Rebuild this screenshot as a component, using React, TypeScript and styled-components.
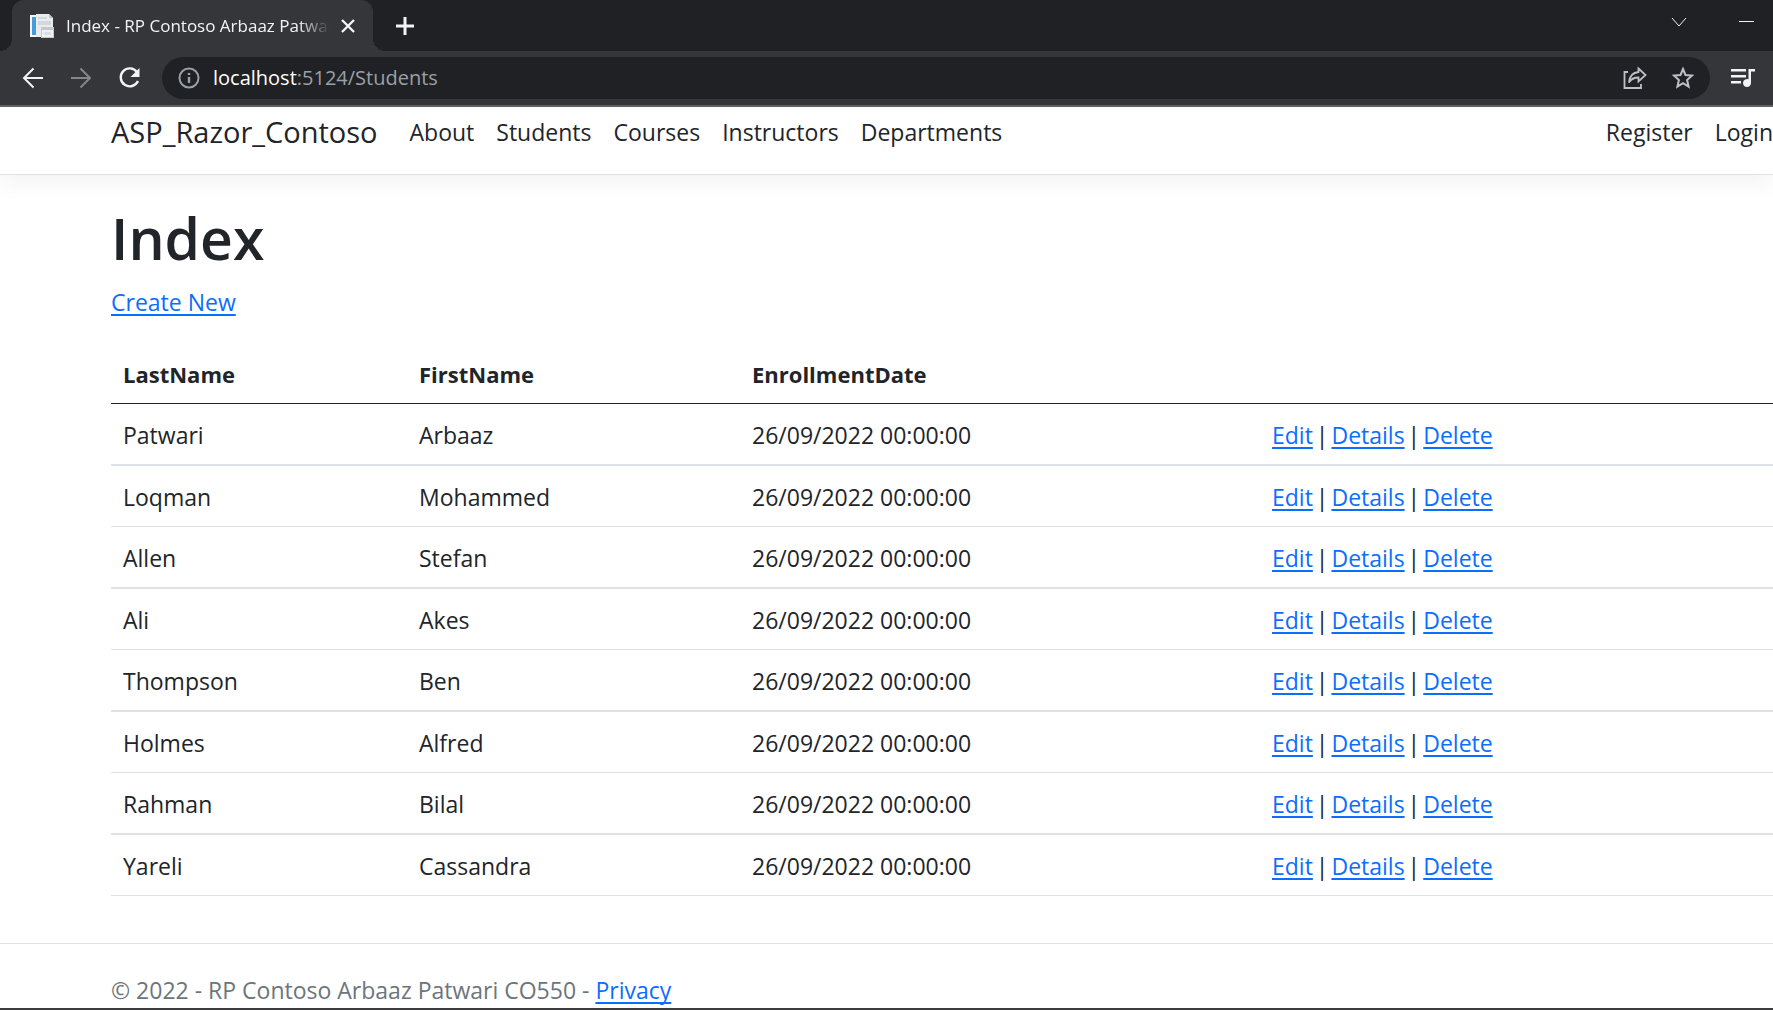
import React from 'react';
import styled, { createGlobalStyle } from 'styled-components';

const GlobalStyle = createGlobalStyle`
  *, *::before, *::after { box-sizing: border-box; }
  body {
    margin: 0;
    background: #fff;
    color: #212529;
    font-family: "Open Sans", "Noto Sans", sans-serif;
    font-size: 23px;
    line-height: 36px;
  }
`;

const Browser = styled.div`
  display: flex;
  flex-direction: column;
  height: 100vh;
  overflow: hidden;
  border-bottom: 2px solid #3c3c3e;
`;

const TabStrip = styled.div`
  display: flex;
  flex: none;
  align-items: stretch;
  height: 51px;
  padding-left: 12px;
  background: #202124;
`;

const Tab = styled.div`
  position: relative;
  display: flex;
  align-items: center;
  width: 361px;
  padding: 0 13px 0 18px;
  border-radius: 12px 12px 0 0;
  background: #35363a;

  &::before, &::after {
    content: "";
    position: absolute;
    bottom: 0;
    width: 12px;
    height: 12px;
  }
  &::before {
    left: -12px;
    background: radial-gradient(circle at 0 0, #202124 12px, #35363a 12px);
  }
  &::after {
    right: -12px;
    background: radial-gradient(circle at 100% 0, #202124 12px, #35363a 12px);
  }
`;

const TabTitle = styled.span`
  flex: 1;
  min-width: 0;
  margin: 0 6px 0 12px;
  overflow: hidden;
  white-space: nowrap;
  color: #f1f3f4;
  font-size: 17px;
  mask-image: linear-gradient(to right, #000 88%, transparent 100%);
`;

const IconButton = styled.button<{ $size?: number; $color?: string }>`
  display: flex;
  flex: none;
  align-items: center;
  justify-content: center;
  width: ${(p) => p.$size ?? 48}px;
  height: ${(p) => p.$size ?? 48}px;
  padding: 0;
  border: 0;
  background: none;
  color: ${(p) => p.$color ?? '#f1f3f4'};
`;

const NewTab = styled.div`
  display: flex;
  flex: 1;
  align-items: center;
  padding-left: 8px;
`;

const WindowControls = styled.div`
  display: flex;
  align-items: center;
  padding-bottom: 8px;
  gap: 20px;
  margin-right: 2px;
`;

const Toolbar = styled.div`
  display: flex;
  flex: none;
  align-items: center;
  height: 56px;
  padding: 0 6px 0 9px;
  border-bottom: 2px solid #5f6065;
  background: #35363a;
`;

const AddressBar = styled.div`
  display: flex;
  flex: 1;
  align-items: center;
  height: 42px;
  margin: 0 9px;
  padding: 0 3px;
  border-radius: 21px;
  background: #202124;
  font-size: 20px;
`;

const Host = styled.label`
  color: #fff;
`;

const UrlInput = styled.input`
  flex: 1;
  min-width: 0;
  padding: 0;
  border: 0;
  outline: 0;
  background: none;
  color: #9aa0a6;
  font: inherit;
`;

const Viewport = styled.div`
  flex: 1;
  min-height: 0;
  overflow: hidden;
`;

const Navbar = styled.nav`
  display: flex;
  align-items: center;
  height: 68px;
  padding: 0 0 17px 111px;
  border-bottom: 1px solid #dee2e6;
  box-shadow: 0 8px 24px rgba(0, 0, 0, 0.05);
`;

const Brand = styled.a`
  margin-right: 32px;
  color: #212529;
  font-size: 29px;
  text-decoration: none;
`;

const NavLinks = styled.div`
  display: flex;
  gap: 22px;

  & + & { margin-left: auto; }
`;

const NavLink = styled.a`
  color: #212529;
  text-decoration: none;
`;

const Main = styled.main`
  padding: 27px 0 47px 111px;
`;

const Heading = styled.h1`
  margin: 0 0 10px;
  font-size: 57px;
  font-weight: 600;
  line-height: 72px;
`;

const Actions = styled.p`
  margin: 0 0 23px;
`;

const Link = styled.a`
  color: #0d6efd;
  text-decoration: underline;
  text-decoration-thickness: 2px;
  text-underline-offset: 3px;
  text-decoration-skip-ink: none;
`;

const Separator = styled.span`
  margin: 0 -3px;
`;

const Table = styled.table`
  width: 100%;
  table-layout: fixed;
  border-collapse: separate;
  border-spacing: 0;
`;

const Column = styled.col<{ $width?: number }>`
  width: ${(p) => (p.$width ? `${p.$width}px` : 'auto')};
`;

const HeaderCell = styled.th`
  padding: 13px 12px 11px;
  border-bottom: 1px solid #212529;
  font-size: 22px;
  font-weight: 700;
  text-align: left;
`;

const Row = styled.tr`
  & > td { border-bottom: 1px solid #dee2e6; }
  &:nth-child(odd) > td { border-bottom-width: 2px; }
`;

const Cell = styled.td`
  padding: 13px 12px 11px;
`;

const Footer = styled.footer`
  padding-left: 111px;
  border-top: 1px solid #dee2e6;
  color: #6c757d;
  line-height: 92px;
`;

const students = [
  ['Patwari', 'Arbaaz'],
  ['Loqman', 'Mohammed'],
  ['Allen', 'Stefan'],
  ['Ali', 'Akes'],
  ['Thompson', 'Ben'],
  ['Holmes', 'Alfred'],
  ['Rahman', 'Bilal'],
  ['Yareli', 'Cassandra'],
];

const PageIcon = () => (
  <svg width="24" height="24" viewBox="0 0 24 24" aria-hidden="true">
    <path d="M0 1h14v22H0z" fill="#f4f6f8" />
    <path d="M2 3h4v18H2z" fill="#4a9bd8" />
    <path d="M6 0h13l4 4v19H6z" fill="#e9ebed" />
    <path d="M19 0l4 4h-4z" fill="#bfc5ca" />
    <path d="M8 3h9v2H8zM8 7h13v4H8z" fill="#d3d8dc" />
    <path d="M11 13h13v11H11z" fill="#c3c8cd" />
    <path d="M12 16h11v7H12z" fill="#eef0f2" />
    <path d="M14 18h7v3h-7z" fill="#dadfe3" />
  </svg>
);

const Stroke = ({ size, d, width = 2 }: { size: number; d: string; width?: number }) => (
  <svg width={size} height={size} viewBox={`0 0 ${size} ${size}`} fill="none" stroke="currentColor" strokeWidth={width} aria-hidden="true">
    <path d={d} />
  </svg>
);

const ReloadIcon = () => (
  <svg width="24" height="24" viewBox="0 0 24 24" fill="none" aria-hidden="true">
    <path d="M20 6A9 9 0 1 0 21 15" stroke="currentColor" strokeWidth="2.4" />
    <path d="M22.500 2v9h-9z" fill="currentColor" />
  </svg>
);

const InfoIcon = () => (
  <svg width="22" height="22" viewBox="0 0 22 22" fill="none" stroke="currentColor" strokeWidth="2" aria-hidden="true">
    <circle cx="11" cy="11" r="9.500" />
    <path d="M11 10v6M11 6v2" strokeWidth="2.400" />
  </svg>
);

const ShareIcon = () => (
  <svg width="24" height="24" viewBox="0 0 24 24" fill="none" stroke="currentColor" strokeWidth="1.800" aria-hidden="true">
    <path d="M5 6H1.500v16h16.500v-4" />
    <path d="M15.500 2.500L22.500 9l-7 6.500v-4C11 11.500 8 13 6 16.500 6.500 10.500 10 6.500 15.500 6z" />
  </svg>
);

const StarIcon = () => (
  <svg width="24" height="24" viewBox="0 0 24 24" fill="none" stroke="currentColor" strokeWidth="2" aria-hidden="true">
    <path d="M12 3l2.500 6 6.500.6-4.900 4.400 1.500 6.600-5.600-3.500-5.600 3.500 1.500-6.600L3 9.600l6.500-.6z" />
  </svg>
);

const MusicQueueIcon = () => (
  <svg width="26" height="22" viewBox="0 0 26 22" fill="currentColor" aria-hidden="true">
    <path d="M1 2h15v2.500H1zM1 8h15v2.500H1zM1 14h10v2.500H1z" />
    <path d="M18.500 2H25v2.500h-4V16a4 4 0 1 1-2.500-3.700z" />
  </svg>
);

export default function App() {
  return (
    <>
      <GlobalStyle />
      <Browser>
        <TabStrip>
          <Tab>
            <PageIcon />
            <TabTitle>Index - RP Contoso Arbaaz Patwari</TabTitle>
            <IconButton $size={24} aria-label="Close tab">
              <Stroke size={16} width={2.4} d="M2 2l12 12M14 2L2 14" />
            </IconButton>
          </Tab>
          <NewTab>
            <IconButton aria-label="New tab">
              <Stroke size={18} width={3} d="M9 0v18M0 9h18" />
            </IconButton>
          </NewTab>
          <WindowControls>
            <IconButton aria-label="Search tabs">
              <Stroke size={16} width={1} d="M1 4l7 8 7-8" />
            </IconButton>
            <IconButton aria-label="Minimize">
              <Stroke size={16} width={1} d="M0 7.500h15" />
            </IconButton>
          </WindowControls>
        </TabStrip>
        <Toolbar>
          <IconButton aria-label="Back">
            <Stroke size={22} d="M21 11H2M11.500 1.500L2 11l9.500 9.500" />
          </IconButton>
          <IconButton $color="#85868a" aria-label="Forward">
            <Stroke size={22} d="M1 11h19M10.500 1.500L20 11l-9.500 9.500" />
          </IconButton>
          <IconButton aria-label="Reload">
            <ReloadIcon />
          </IconButton>
          <AddressBar>
            <IconButton $color="#9aa0a6" aria-label="Site information">
              <InfoIcon />
            </IconButton>
            <Host htmlFor="url">localhost</Host>
            <UrlInput id="url" defaultValue=":5124/Students" />
            <IconButton $color="#bdc1c6" aria-label="Share">
              <ShareIcon />
            </IconButton>
            <IconButton $color="#bdc1c6" aria-label="Bookmark">
              <StarIcon />
            </IconButton>
          </AddressBar>
          <IconButton aria-label="Media controls">
            <MusicQueueIcon />
          </IconButton>
        </Toolbar>
        <Viewport>
          <Navbar>
            <Brand href="#">ASP_Razor_Contoso</Brand>
            <NavLinks>
              {['About', 'Students', 'Courses', 'Instructors', 'Departments'].map((name) => (
                <NavLink key={name} href="#">{name}</NavLink>
              ))}
            </NavLinks>
            <NavLinks>
              <NavLink href="#">Register</NavLink>
              <NavLink href="#">Login</NavLink>
            </NavLinks>
          </Navbar>
          <Main>
            <Heading>Index</Heading>
            <Actions>
              <Link href="#">Create New</Link>
            </Actions>
            <Table>
              <colgroup>
                <Column $width={296} />
                <Column $width={333} />
                <Column $width={520} />
                <Column />
              </colgroup>
              <thead>
                <tr>
                  <HeaderCell>LastName</HeaderCell>
                  <HeaderCell>FirstName</HeaderCell>
                  <HeaderCell>EnrollmentDate</HeaderCell>
                  <HeaderCell />
                </tr>
              </thead>
              <tbody>
                {students.map(([last, first]) => (
                  <Row key={last}>
                    <Cell>{last}</Cell>
                    <Cell>{first}</Cell>
                    <Cell>26/09/2022 00:00:00</Cell>
                    <Cell>
                      <Link href="#">Edit</Link> <Separator>|</Separator> <Link href="#">Details</Link>{' '}
                      <Separator>|</Separator> <Link href="#">Delete</Link>
                    </Cell>
                  </Row>
                ))}
              </tbody>
            </Table>
          </Main>
          <Footer>
            © 2022 - RP Contoso Arbaaz Patwari CO550 - <Link href="#">Privacy</Link>
          </Footer>
        </Viewport>
      </Browser>
    </>
  );
}
